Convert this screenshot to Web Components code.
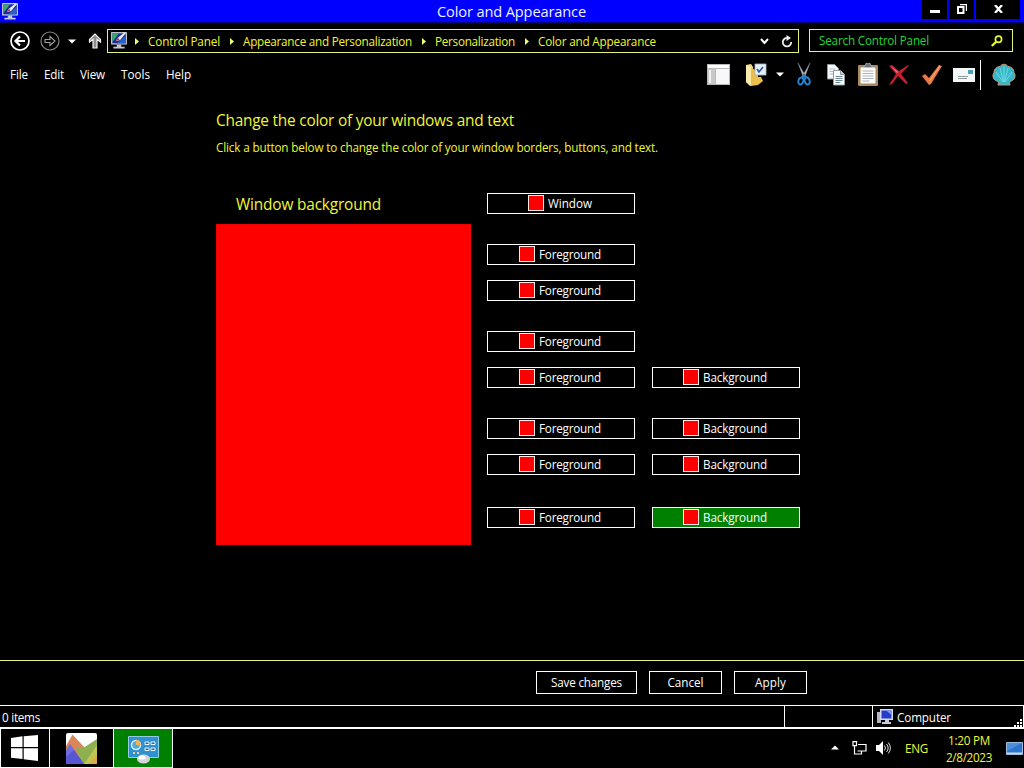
<!DOCTYPE html>
<html lang="en">
<head>
<meta charset="utf-8">
<title>Color and Appearance</title>
<style>
    body {
        margin: 0;
        width: 1024px;
        height: 768px;
        overflow: hidden;
        background: #000;
        color: #fff;
        font: 11.7px "Open Sans", "Noto Sans", sans-serif;
    }
</style>
</head>
<body>
<color-window></color-window>

<script>
const yellow = '#eff636';
const line = '#e6f07c';

const monitor = `
    <path d="M1 1h14v11H1z" fill="#d9dce8"/>
    <path d="M2 2h12v9H2z" fill="#1d2b94"/>
    <path d="M2 2h6l-6 8z" fill="#38a86c"/>
    <path d="M6 11l8-7v7z" fill="#2862c4"/>
    <path d="M5 9l2-3 6-5 1 1-5 6z" fill="#e8eaf6"/>
    <path d="M5 9l2-3 1.500 1.500z" fill="#b23a68"/>
    <path d="M6 12h4v2h3v1.500H3V14h3z" fill="#c3c7d2"/>`;

// name: [width, height, view box, markup]
const icons = {
    monitor: [18, 18, '0 0 16 16', monitor],
    back: [20, 20, '0 0 20 20', `<circle cx="10" cy="10" r="9" fill="none" stroke="#fff" stroke-width="1.700"/>
        <path d="M15 10H6.500M10 5.500L5.500 10l4.500 4.500" fill="none" stroke="#fff" stroke-width="2.200"/>`],
    forward: [20, 20, '0 0 20 20', `<circle cx="10" cy="10" r="9" fill="none" stroke="#858585" stroke-width="1.200"/>
        <path d="M5 8.500h5V5.500l5 4.500-5 4.500v-3H5z" fill="none" stroke="#a0a0a0" stroke-width="1.100"/>`],
    down: [8, 5, '0 0 8 5', `<path d="M0 .5h8L4 4.500z" fill="#fff"/>`],
    up: [14, 16, '0 0 14 16', `<path d="M7 1L1.500 6.500v2.500L5 6.500V15h4V6.500L12.500 9V6.500z" fill="#8d8d8d" stroke="#f4f4f4" stroke-width="1.200"/>`],
    crumb: [4, 7, '0 0 4 7', `<path d="M0 0l4 3.500L0 7z" fill="#effb6a"/>`],
    chevron: [9, 7, '0 0 9 7', `<path d="M1 1l3.500 4L8 1" fill="none" stroke="#fff" stroke-width="2"/>`],
    refresh: [12, 13, '0 0 12 13', `<path d="M6.500 3A4.200 4.200 0 1 0 10.200 7" fill="none" stroke="#eee" stroke-width="1.800"/><path d="M5.500 0l4.500 3-4.500 3z" fill="#eee"/>`],
    search: [12, 12, '0 0 12 12', `<circle cx="7.500" cy="4.300" r="3.100" fill="none" stroke="#e5f52b" stroke-width="1.700"/><path d="M5.300 6.600L.8 11" stroke="#e5f52b" stroke-width="2.200"/>`],
    layout: [23, 21, '0 0 23 21', `<path d="M0 0h23v21H0z" fill="#b9b9b9"/><path d="M1 1h21v3H1z" fill="#fff"/>
        <path d="M1 5h7v15H1z" fill="#c9c9c9"/><path d="M2 6h2v13H2z" fill="#f2f2f2"/><path d="M9 5h13v15H9z" fill="#f8f8fa"/>`],
    folder: [22, 24, '0 0 22 24', `<path d="M1 2l5-1 2 3v17l-3 2-4-4z" fill="#f4dd86"/><path d="M6 5l7 3v14l-7 1z" fill="#e8bd4e"/>
        <path d="M1 2l5 3v18l-5-4z" fill="#fbeaa8"/><path d="M10 1h11v11H10z" fill="#e7eff7" stroke="#a9b9c9" stroke-width=".8"/>
        <path d="M12 6l2 3 4-5" fill="none" stroke="#2455a0" stroke-width="1.600"/><path d="M9 14h7l2 4-5 4-5-2z" fill="#ecc24e"/>`],
    cut: [14, 23, '0 0 14 23', `<path d="M1 0l7.500 13-2 1.500zM13 0L5.500 13l2 1.500z" fill="#c3c7cc" stroke="#80868e" stroke-width=".5"/>
        <ellipse cx="3.800" cy="18" rx="2.400" ry="3.500" transform="rotate(18 3.800 18)" fill="none" stroke="#1f86d8" stroke-width="1.900"/>
        <ellipse cx="10.200" cy="18" rx="2.400" ry="3.500" transform="rotate(-18 10.200 18)" fill="none" stroke="#1f86d8" stroke-width="1.900"/>
        <path d="M4.500 14.500L7 12.500l2.500 2" fill="none" stroke="#1f86d8" stroke-width="2"/>`],
    copy: [19, 22, '0 0 19 22', `<path d="M.5.5h7l4 4V15H.5z" fill="#f4f6f8" stroke="#8f989f"/><path d="M2.500 5h6M2.500 7.500h6M2.500 10h4" stroke="#b6bec6"/>
        <path d="M6.500 6.500h7l4 4V21h-11z" fill="#fff" stroke="#8f989f"/><path d="M13.500 6.500v4h4" fill="#cbd3da" stroke="#8f989f"/><path d="M8.500 12.500h7M8.500 14.500h7M8.500 16.500h7M8.500 18.500h5" stroke="#6c8498"/>`],
    paste: [20, 23, '0 0 20 23', `<rect y="2" width="20" height="21" rx="1" fill="#a98a5c"/><path d="M2.500 4.500h15v16h-15z" fill="#fbfbfb"/>
        <path d="M5 4.500L7.500 2a2.500 2.500 0 0 1 5 0L15 4.500z" fill="#68717a" stroke="#d2d6da" stroke-width=".7"/><path d="M4.500 8h11M4.500 10.500h11M4.500 13h11M4.500 15.500h11M4.500 18h7" stroke="#b1b3bb"/>`],
    remove: [21, 20, '0 0 21 20', `<path d="M0 1l3-1 7 6 9-6 1 .5L12 9l7 9-2 1-8-8-6 8-3 1 7-11z" fill="#c51f32"/><path d="M2 1l7 6-1 1z" fill="#f08b92"/>`],
    check: [22, 22, '0 0 22 22', `<path d="M1 12l3-2 4 4L18 1l3 1L10 20l-2 1z" fill="#e87842"/><path d="M8.500 17L19 2" stroke="#f7a87b" stroke-width="1.200"/>`],
    mail: [22, 14, '0 0 22 14', `<path d="M0 0h22v14H0z" fill="#f4f7f8"/><path d="M15 2h5v4h-5z" fill="#4f9fb1"/><path d="M5 8.500h10M5 10.500h9" stroke="#9299a0"/>`],
    shell: [24, 23, '0 0 24 23', `<path d="M6 22l.5-3.500C1.500 18-.5 13 2 9.500 2 6 5 3.500 8 3.500c2-3 6-3 8 0 3 0 6 2.500 6 6 2.500 3.500.5 8.500-4.500 9L18 22z" fill="#35b9ca" stroke="#c9916f"/>
        <path d="M11 19L4 9M11.500 19L8 5M12 19V3M12.500 19L16 5M13 19l7-10" stroke="#7fdde2" stroke-width=".8"/>`],
    start: [27, 26, '0 0 27 26', `<path d="M0 3l11.500-1.700V12H0zM12.700 1.200L27 0v12H12.700zM0 13.200h11.500V24L0 22.800zM12.700 13.200H27V26l-14.300-1.800z" fill="#fff"/>`],
    peaks: [31, 31, '0 0 31 31', `<rect width="31" height="31" rx="2" fill="#fff"/>
        <path d="M0 13L6.500 1.500 19 15l-3 10H0z" fill="#d98659"/>
        <path d="M10 14.500h8L31 6v23q0 2-2 2H16z" fill="#8fb04e"/>
        <path d="M18 31L31 12v17q0 2-2 2z" fill="#bfc653"/><path d="M22 31l9-8v6q0 2-2 2z" fill="#dba94a"/>
        <path d="M0 17l4-6 14 20H2q-2 0-2-2z" fill="#6f6be0"/><path d="M0 24l8-7 10 14H2q-2 0-2-2z" fill="#5856d0"/>`],
    panel: [31, 28, '0 0 31 28', `<path d="M.5.5h30v21H.5z" fill="#2f91d0" stroke="#91cbe9"/><circle cx="8" cy="9" r="4.500" fill="#4cabe0" stroke="#d6eef9" stroke-width="1.500"/>
        <path d="M8 9V3.500A5.500 5.500 0 0 1 13 9z" fill="#f0b357"/><path d="M17 6h4v2.500h-4zM23 6h4v2.500h-4zM17 12h4v2.500h-4zM23 12h4v2.500h-4z" fill="#1f6da8" stroke="#e8f6fc"/>
        <path d="M5 17h2M9 17h2" stroke="#f1cda1" stroke-width="2"/><ellipse cx="15.500" cy="23" rx="6.500" ry="4.500" fill="#d3d6d9"/><ellipse cx="14" cy="21.500" rx="3.500" ry="2" fill="#fff"/>`],
    computer: [17, 16, '0 0 17 16', `<path d="M0 3h4v11H0z" fill="#b5b8c3"/><path d="M3 0h13v11H3z" fill="#d8dbec"/><path d="M4.500 1.500h10v8h-10z" fill="#263dc9"/><path d="M9 1.500h5.500V6z" fill="#8194f2"/><path d="M8 11h4v2h2v2H5v-2h3z" fill="#c9ccd8"/>`],
    grip: [8, 8, '0 0 8 8', `<path d="M6 0h2v2H6zM3 3h2v2H3zM6 3h2v2H6zM0 6h2v2H0zM3 6h2v2H3zM6 6h2v2H6z" fill="#fff"/>`],
    tray: [8, 5, '0 0 8 5', `<path d="M0 4.500h8L4 .5z" fill="#fff"/>`],
    network: [15, 14, '0 0 15 14', `<path d="M6 3.500h8v6.500H5.500M2.500 5v8H10M9.500 10v3" fill="none" stroke="#fff" stroke-width="1.200"/><path d="M1 .6h3.500v4H1z" fill="#000" stroke="#fff" stroke-width="1.200"/>`],
    sound: [15, 14, '0 0 15 14', `<path d="M0 4h3l4-4v14l-4-4H0z" fill="#fff"/><path d="M8.500 4.500q2 2.500 0 5M10.500 3q3.300 4 0 8M12.300 1.500q4.200 5.500 0 11" fill="none" stroke="#ddd"/>`],
    desktop: [17, 13, '0 0 17 13', `<path d="M.5.5h16v12H.5z" fill="#2a74cd" stroke="#9dbbdc"/><path d="M1 1h15L1 9z" fill="#4a8fdc"/><path d="M1 10.500h15v1.500H1z" fill="#c8d6e7"/>`],
    minimize: [10, 3, '0 0 10 3', `<path d="M0 0h10v3H0z" fill="#fff"/>`],
    restore: [10, 10, '0 0 10 10', `<path d="M1 3h5.500v6H1z" fill="none" stroke="#fff" stroke-width="2"/><path d="M3 .6h6.400V7" fill="none" stroke="#fff" stroke-width="1.200"/>`],
    close: [9, 8, '0 0 9 8', `<path d="M1 0l7 8M8 0L1 8" stroke="#fff" stroke-width="2.300"/>`]
};

class UiIcon extends HTMLElement {
    connectedCallback() {
        const [w, h, box, markup] = icons[this.getAttribute('name')];
        this.attachShadow({ mode: 'open' }).innerHTML = `
            <style>
                :host { display: block; flex: none; }
                svg { display: block; }
            </style>
            <svg width="${w}" height="${h}" viewBox="${box}">${markup}</svg>`;
    }
}
customElements.define('ui-icon', UiIcon);

// A single line of text, tracked so that it fills the given width
class UiText extends HTMLElement {
    connectedCallback() {
        this.attachShadow({ mode: 'open' }).innerHTML = `
            <style>
                :host { display: block; flex: none; white-space: nowrap; width: ${this.getAttribute('w')}px; }
            </style>
            <span><slot></slot></span>`;
        const natural = this.shadowRoot.querySelector('span').getBoundingClientRect().width;
        const gap = (this.getAttribute('w') - natural) / this.textContent.length;
        this.style.letterSpacing = gap.toFixed(3) + 'px';
    }
}
customElements.define('ui-text', UiText);

class TitleBar extends HTMLElement {
    connectedCallback() {
        this.attachShadow({ mode: 'open' }).innerHTML = `
            <style>
                :host { display: grid; grid-template-columns: 120px 1fr 120px; height: 23px; box-sizing: border-box;
                    background: #00f; border-bottom: 1px solid #00007a; }
                .icon { padding: 2px 0 0 1px; }
                .title { justify-self: center; font-size: 14.6px; line-height: 23px; color: #eef2ff; padding-right: 1px; }
                .buttons { display: flex; gap: 2px; justify-content: flex-end; padding-right: 4px; height: 19px; }
                .buttons div { display: grid; place-items: center; box-sizing: border-box; width: 25px; background: #000; padding-bottom: 1px; }
                .buttons .min { padding: 4px 0 0; }
                .buttons .close { width: 44px; }
            </style>
            <div class="icon"><ui-icon name="monitor"></ui-icon></div>
            <div class="title"><ui-text w="149">Color and Appearance</ui-text></div>
            <div class="buttons">
                <div class="min"><ui-icon name="minimize"></ui-icon></div>
                <div><ui-icon name="restore"></ui-icon></div>
                <div class="close"><ui-icon name="close"></ui-icon></div>
            </div>`;
    }
}
customElements.define('title-bar', TitleBar);

class NavBar extends HTMLElement {
    connectedCallback() {
        this.attachShadow({ mode: 'open' }).innerHTML = `
            <style>
                :host { display: flex; padding: 6px 11px 0 10px; height: 34px; box-sizing: border-box; color: ${yellow}; }
                .travel { display: flex; align-items: center; width: 97px; height: 24px; }
                .travel ui-icon + ui-icon { margin-left: 10px; }
                .travel ui-icon:nth-child(3) { margin-left: 8px; }
                .travel ui-icon:nth-child(4) { margin-left: 12px; }
                .address, .search { display: flex; align-items: center; border: 1px solid ${line}; box-sizing: border-box; }
                .address { width: 692px; height: 24px; padding: 0 5px 0 2px; }
                .address ui-text, .search ui-text { padding-bottom: 1px; }
                .address ui-icon[name=crumb] { margin: 0 9px 0 10px; }
                .address ui-icon[name=monitor] { margin: -2px -3px 0 0; }
                .address ui-icon[name=chevron] { margin-left: auto; }
                .address ui-icon[name=refresh] { margin-left: 12px; }
                .search { width: 204px; height: 23px; margin-left: 10px; padding: 0 9px; justify-content: space-between; color: #20d838; }
            </style>
            <div class="travel">
                <ui-icon name="back"></ui-icon><ui-icon name="forward"></ui-icon>
                <ui-icon name="down"></ui-icon><ui-icon name="up"></ui-icon>
            </div>
            <div class="address">
                <ui-icon name="monitor"></ui-icon>
                <ui-icon name="crumb"></ui-icon><ui-text w="72">Control Panel</ui-text>
                <ui-icon name="crumb"></ui-icon><ui-text w="169">Appearance and Personalization</ui-text>
                <ui-icon name="crumb"></ui-icon><ui-text w="80">Personalization</ui-text>
                <ui-icon name="crumb"></ui-icon><ui-text w="118">Color and Appearance</ui-text>
                <ui-icon name="chevron"></ui-icon><ui-icon name="refresh"></ui-icon>
            </div>
            <div class="search"><ui-text w="110">Search Control Panel</ui-text><ui-icon name="search"></ui-icon></div>`;
    }
}
customElements.define('nav-bar', NavBar);

class MenuBar extends HTMLElement {
    connectedCallback() {
        this.attachShadow({ mode: 'open' }).innerHTML = `
            <style>
                :host { display: flex; justify-content: space-between; align-items: center; height: 36px; padding: 0 8px 0 10px; }
                .menu { display: flex; gap: 16px; padding-bottom: 2px; }
                .tools { display: flex; align-items: center; }
                .tools ui-icon { margin-bottom: 1px; }
                .line { width: 1px; height: 30px; background: #fff; margin: 0 11px 0 5px; }
            </style>
            <div class="menu">
                <ui-text w="18">File</ui-text><ui-text w="20">Edit</ui-text><ui-text w="25">View</ui-text>
                <ui-text w="29">Tools</ui-text><ui-text w="25">Help</ui-text>
            </div>
            <div class="tools">
                <ui-icon name="layout"></ui-icon>
                <ui-icon name="folder" style="margin-left:15px"></ui-icon>
                <ui-icon name="down" style="margin-left:9px"></ui-icon>
                <ui-icon name="cut" style="margin-left:13px"></ui-icon>
                <ui-icon name="copy" style="margin-left:16px"></ui-icon>
                <ui-icon name="paste" style="margin-left:12px"></ui-icon>
                <ui-icon name="remove" style="margin-left:11px"></ui-icon>
                <ui-icon name="check" style="margin-left:11px"></ui-icon>
                <ui-icon name="mail" style="margin-left:10px"></ui-icon>
                <div class="line"></div>
                <ui-icon name="shell"></ui-icon>
            </div>`;
    }
}
customElements.define('menu-bar', MenuBar);

class ColorButton extends HTMLElement {
    connectedCallback() {
        this.attachShadow({ mode: 'open' }).innerHTML = `
            <style>
                :host { display: flex; justify-content: center; gap: 4px; box-sizing: border-box; width: 148px; height: 21px;
                    border: 1px solid #fff; padding-right: 2px; line-height: 18px; }
                :host([active]) { background: #008000; }
                .swatch { box-sizing: border-box; width: 16px; height: 16px; margin-top: 1px; background: #f00; border: 1px solid #ffe8e8; }
            </style>
            <div class="swatch"></div>
            <ui-text w="${this.getAttribute('w')}">${this.getAttribute('label')}</ui-text>`;
    }
}
customElements.define('color-button', ColorButton);

class ColorPage extends HTMLElement {
    connectedCallback() {
        const fore = '<color-button label="Foreground" w="62"></color-button>';
        const back = '<color-button label="Background" w="64"></color-button>';
        this.attachShadow({ mode: 'open' }).innerHTML = `
            <style>
                :host { display: block; height: 567px; box-sizing: border-box; padding: 17px 0 0 216px; color: ${yellow}; }
                .heading { font-size: 15.4px; line-height: 22px; }
                .hint { line-height: 18px; margin-top: 6px; }
                .columns { display: flex; gap: 16px; margin-top: 37px; }
                .name { box-sizing: border-box; font-size: 15.4px; line-height: 22px; height: 31px; padding: 1px 0 0 20px; }
                .preview { width: 255px; height: 321px; background: #f00; box-shadow: inset 0 0 1px #600; }
                .groups { display: flex; flex-direction: column; gap: 30px; color: #fff; }
                .group { display: grid; grid-template-columns: 148px 148px; gap: 15px 17px; }
                .group.last { margin-top: 2px; }
            </style>
            <div class="heading"><ui-text w="298">Change the color of your windows and text</ui-text></div>
            <div class="hint"><ui-text w="442">Click a button below to change the color of your window borders, buttons, and text.</ui-text></div>
            <div class="columns">
                <div>
                    <div class="name"><ui-text w="145">Window background</ui-text></div>
                    <div class="preview"></div>
                </div>
                <div class="groups">
                    <div class="group"><color-button label="Window" w="44"></color-button></div>
                    <div class="group">${fore}<span></span>${fore}</div>
                    <div class="group">${fore}<span></span>${fore}${back}</div>
                    <div class="group">${fore}${back}${fore}${back}</div>
                    <div class="group last">${fore}${back.replace('<color-button', '<color-button active')}</div>
                </div>
            </div>`;
    }
}
customElements.define('color-page', ColorPage);

class CommandBar extends HTMLElement {
    connectedCallback() {
        this.attachShadow({ mode: 'open' }).innerHTML = `
            <style>
                :host { display: flex; gap: 12px; box-sizing: border-box; height: 45px; padding: 10px 0 0 536px; border-top: 1px solid ${line}; }
                .button { display: flex; justify-content: center; box-sizing: border-box; width: 73px; height: 23px; line-height: 20px; border: 1px solid #fff; }
                .wide { width: 101px; }
            </style>
            <div class="button wide"><ui-text w="71">Save changes</ui-text></div>
            <div class="button"><ui-text w="36">Cancel</ui-text></div>
            <div class="button"><ui-text w="31">Apply</ui-text></div>`;
    }
}
customElements.define('command-bar', CommandBar);

class StatusBar extends HTMLElement {
    connectedCallback() {
        this.attachShadow({ mode: 'open' }).innerHTML = `
            <style>
                :host { display: grid; grid-template-columns: 784px 88px 1fr; box-sizing: border-box; height: 24px; line-height: 22px;
                    border: 1px solid #fff; border-width: 1px 1px 2px 0; }
                .cell { display: flex; align-items: center; padding-left: 2px; }
                .cell + .cell { border-left: 1px solid #fff; padding-left: 4px; }
                ui-icon + ui-text { margin-left: 3px; }
                ui-icon[name=grip] { margin: auto 1px 1px auto; }
            </style>
            <div class="cell"><ui-text w="38">0 items</ui-text></div>
            <div class="cell"></div>
            <div class="cell"><ui-icon name="computer"></ui-icon><ui-text w="54">Computer</ui-text><ui-icon name="grip"></ui-icon></div>`;
    }
}
customElements.define('status-bar', StatusBar);

class TaskBar extends HTMLElement {
    connectedCallback() {
        this.attachShadow({ mode: 'open' }).innerHTML = `
            <style>
                :host { display: flex; justify-content: space-between; height: 39px; color: ${yellow}; }
                .apps, .tray { display: flex; }
                .apps div { display: grid; place-items: center; box-sizing: border-box; height: 39px; border-right: 1px solid #fff; border-bottom: 1px solid #fff; }
                .apps .start { width: 50px; border-left: 1px solid #fff; padding-right: 1px; }
                .apps .peaks { width: 64px; padding-right: 1px; }
                .apps .panel { width: 59px; background: #008000; padding-top: 3px; }
                .tray { align-items: center; height: 37px; padding-right: 1px; }
                .clock { display: grid; justify-items: center; width: 46px; margin: 0 14px 0 18px; line-height: 17px; padding-top: 2px; }
            </style>
            <div class="apps">
                <div class="start"><ui-icon name="start"></ui-icon></div>
                <div class="peaks"><ui-icon name="peaks"></ui-icon></div>
                <div class="panel"><ui-icon name="panel"></ui-icon></div>
            </div>
            <div class="tray">
                <ui-icon name="tray"></ui-icon>
                <ui-icon name="network" style="margin-left:13px"></ui-icon>
                <ui-icon name="sound" style="margin-left:9px"></ui-icon>
                <ui-text w="23" style="margin-left:14px">ENG</ui-text>
                <div class="clock"><ui-text w="42">1:20 PM</ui-text><ui-text w="46">2/8/2023</ui-text></div>
                <ui-icon name="desktop" style="margin-top:2px"></ui-icon>
            </div>`;
    }
}
customElements.define('task-bar', TaskBar);

class ColorWindow extends HTMLElement {
    connectedCallback() {
        this.attachShadow({ mode: 'open' }).innerHTML = `
            <style>
                :host { display: block; width: 1024px; height: 768px; }
            </style>
            <title-bar></title-bar>
            <nav-bar></nav-bar>
            <menu-bar></menu-bar>
            <color-page></color-page>
            <command-bar></command-bar>
            <status-bar></status-bar>
            <task-bar></task-bar>`;
    }
}
customElements.define('color-window', ColorWindow);
</script>
</body>
</html>
